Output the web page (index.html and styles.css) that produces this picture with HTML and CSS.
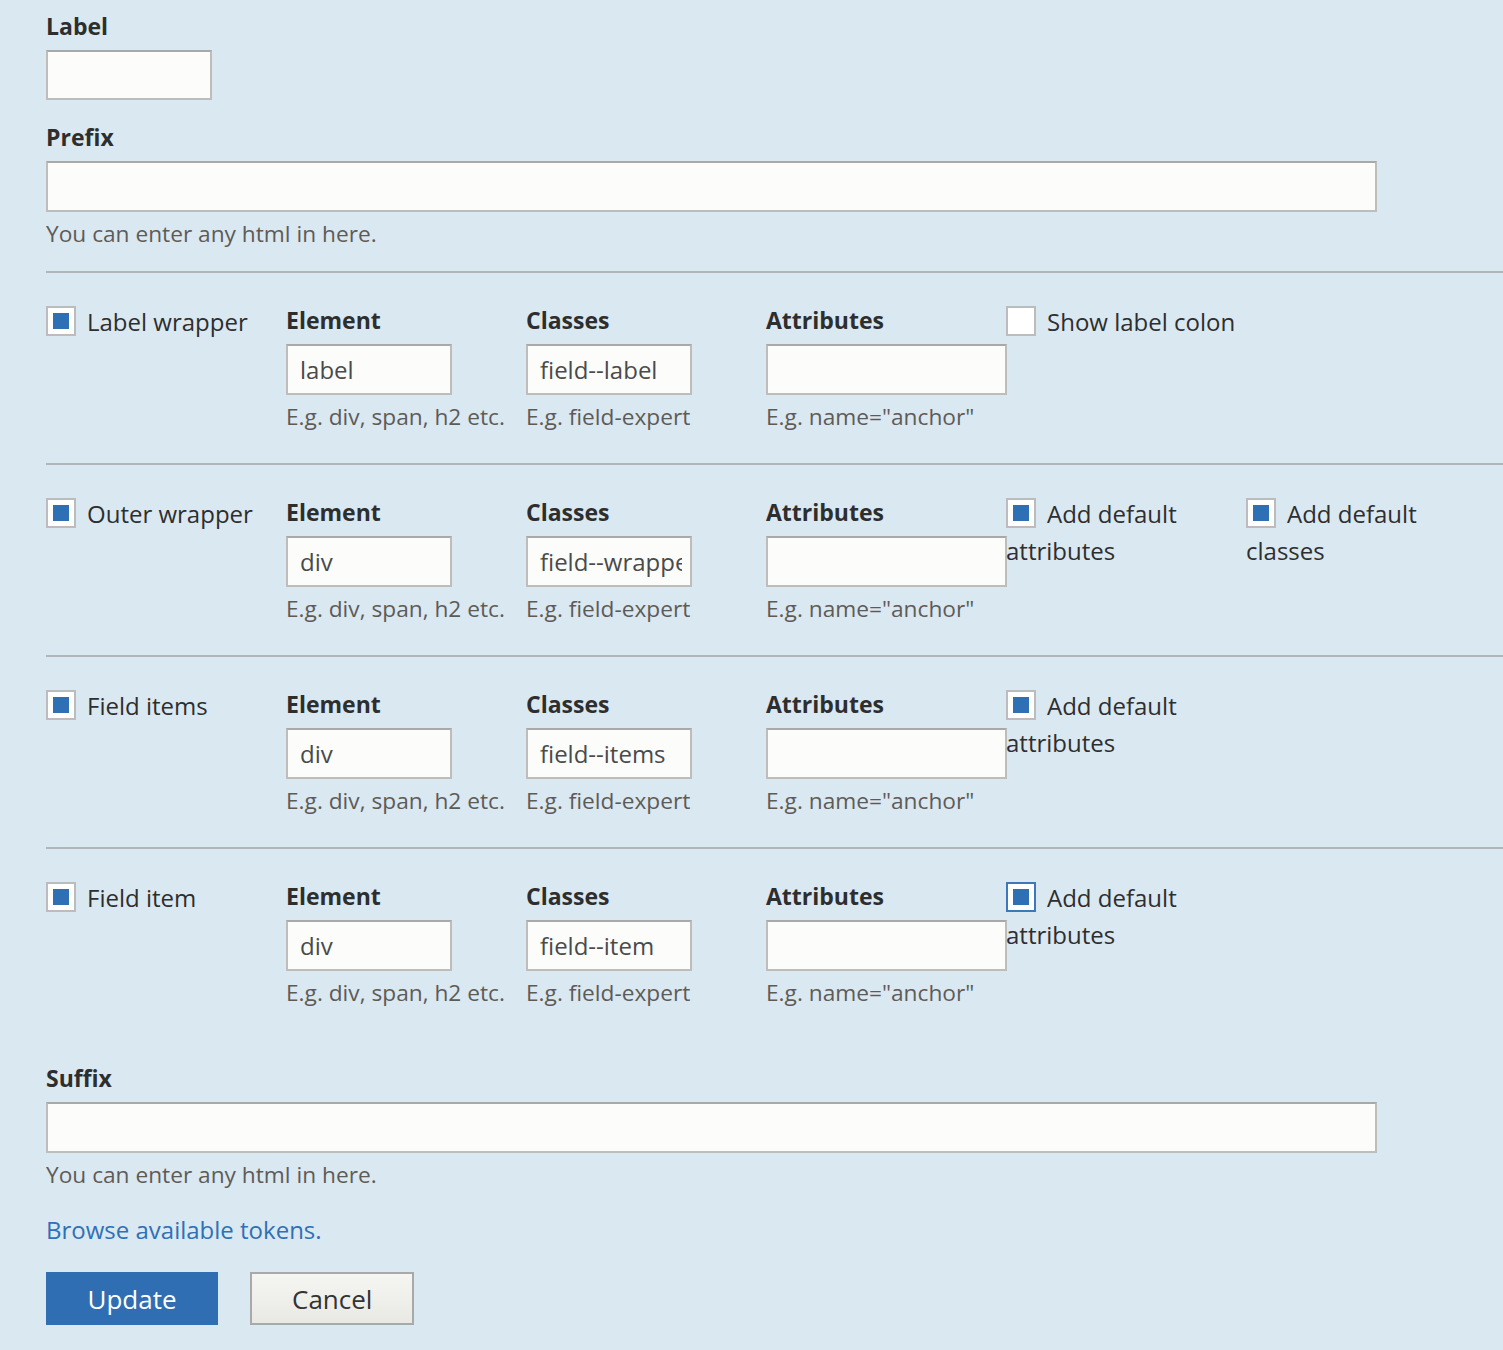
FILE: index.html
```html
<!DOCTYPE html>
<html lang="en">
<head>
<meta charset="utf-8">
<title>Field wrapper settings</title>
<link rel="stylesheet" href="styles.css">
</head>
<body>
<form class="form">
  <div class="field first">
    <label class="title">Label</label>
    <input class="text short label-input" type="text">
  </div>
  <div class="field">
    <label class="title">Prefix</label>
    <input class="text wide" type="text">
    <div class="desc">You can enter any html in here.</div>
  </div>

  <div class="wrap-row">
    <div class="col check-col"><span class="cb checked"></span><span class="cb-text">Label wrapper</span></div>
    <div class="col"><div class="title">Element</div><input class="text short" type="text" value="label"><div class="desc">E.g. div, span, h2 etc.</div></div>
    <div class="col"><div class="title">Classes</div><input class="text short" type="text" value="field--label"><div class="desc">E.g. field-expert</div></div>
    <div class="col"><div class="title">Attributes</div><input class="text attr" type="text"><div class="desc">E.g. name="anchor"</div></div>
    <div class="col check-col nowrap"><span class="cb"></span><span class="cb-text">Show label colon</span></div>
  </div>

  <div class="wrap-row">
    <div class="col check-col"><span class="cb checked"></span><span class="cb-text">Outer wrapper</span></div>
    <div class="col"><div class="title">Element</div><input class="text short" type="text" value="div"><div class="desc">E.g. div, span, h2 etc.</div></div>
    <div class="col"><div class="title">Classes</div><input class="text short" type="text" value="field--wrapper"><div class="desc">E.g. field-expert</div></div>
    <div class="col"><div class="title">Attributes</div><input class="text attr" type="text"><div class="desc">E.g. name="anchor"</div></div>
    <div class="col check-col"><span class="cb checked"></span><span class="cb-text">Add default attributes</span></div>
    <div class="col check-col"><span class="cb checked"></span><span class="cb-text">Add default classes</span></div>
  </div>

  <div class="wrap-row">
    <div class="col check-col"><span class="cb checked"></span><span class="cb-text">Field items</span></div>
    <div class="col"><div class="title">Element</div><input class="text short" type="text" value="div"><div class="desc">E.g. div, span, h2 etc.</div></div>
    <div class="col"><div class="title">Classes</div><input class="text short" type="text" value="field--items"><div class="desc">E.g. field-expert</div></div>
    <div class="col"><div class="title">Attributes</div><input class="text attr" type="text"><div class="desc">E.g. name="anchor"</div></div>
    <div class="col check-col"><span class="cb checked"></span><span class="cb-text">Add default attributes</span></div>
  </div>

  <div class="wrap-row">
    <div class="col check-col"><span class="cb checked"></span><span class="cb-text">Field item</span></div>
    <div class="col"><div class="title">Element</div><input class="text short" type="text" value="div"><div class="desc">E.g. div, span, h2 etc.</div></div>
    <div class="col"><div class="title">Classes</div><input class="text short" type="text" value="field--item"><div class="desc">E.g. field-expert</div></div>
    <div class="col"><div class="title">Attributes</div><input class="text attr" type="text"><div class="desc">E.g. name="anchor"</div></div>
    <div class="col check-col"><span class="cb checked focused"></span><span class="cb-text">Add default attributes</span></div>
  </div>

  <div class="field suffix">
    <label class="title">Suffix</label>
    <input class="text wide" type="text">
    <div class="desc">You can enter any html in here.</div>
  </div>

  <div class="tokens"><a href="#" class="link">Browse available tokens.</a></div>

  <div class="actions">
    <button type="button" class="btn primary">Update</button>
    <button type="button" class="btn secondary">Cancel</button>
  </div>
</form>
</body>
</html>
```

FILE: styles.css
```css
html, body {
  margin: 0;
  padding: 0;
  background: #dae8f1;
}

body {
  font-family: "Open Sans", "Noto Sans", "Liberation Sans", sans-serif;
  color: #333;
  font-size: 24px;
}

.form {
  padding: 9px 0 0 46px;
}

.field {
  margin-top: 20px;
}

.field.first {
  margin-top: 0;
}

.title {
  display: block;
  font-weight: 700;
  font-size: 23px;
  line-height: 34px;
  color: #2e2e2e;
  margin-bottom: 7px;
}

.text {
  display: block;
  box-sizing: border-box;
  height: 51px;
  margin: 0;
  padding: 0 8px 0 12px;
  border: 2px solid #bdbdbb;
  border-top-color: #a9a9a7;
  background: #fcfcfa;
  font-family: "Open Sans", "Noto Sans", "Liberation Sans", sans-serif;
  font-size: 24px;
  color: #4a4a4a;
  border-radius: 0;
  outline: none;
}

.text.label-input {
  height: 50px;
}

.short {
  width: 166px;
}

.attr {
  width: 241px;
}

.wide {
  width: 1331px;
}

.desc {
  margin-top: 7px;
  font-size: 22.7px;
  line-height: 30px;
  color: #5e5b57;
}

.wrap-row {
  display: flex;
  margin-top: 22px;
  border-top: 2px solid #b2b6b8;
  padding: 30px 0 31px;
}

.wrap-row + .wrap-row {
  margin-top: 0;
}

.col {
  width: 240px;
  flex: none;
}

.check-col {
  font-size: 24px;
  line-height: 37px;
  color: #2e2e2e;
}

.nowrap {
  white-space: nowrap;
}

.cb {
  display: inline-block;
  box-sizing: border-box;
  width: 30px;
  height: 30px;
  border: 2px solid #bcbcbc;
  background: #fff;
  vertical-align: top;
  margin-top: 3px;
  margin-right: 11px;
  position: relative;
}

.cb.checked::after {
  content: "";
  position: absolute;
  left: 5px;
  top: 5px;
  width: 16px;
  height: 16px;
  background: #2f6fb4;
}

.cb.focused {
  border-color: #3c78ba;
}

.suffix {
  margin-top: 22px;
}

.tokens {
  margin-top: 23px;
  line-height: 34px;
}

.link {
  color: #2f70b6;
  text-decoration: none;
  font-size: 24px;
}

.actions {
  margin-top: 25px;
  display: flex;
  gap: 32px;
}

.btn {
  box-sizing: border-box;
  height: 53px;
  padding: 0 40px;
  font-family: "Open Sans", "Noto Sans", "Liberation Sans", sans-serif;
  font-size: 26px;
  border-radius: 0;
  margin: 0;
}

.primary {
  width: 172px;
  background: #2f6eb3;
  border: 1px solid #2f6eb3;
  color: #fff;
}

.secondary {
  width: 164px;
  background: linear-gradient(#f5f5f2, #e9e9e4);
  border: 2px solid #a9a9a9;
  color: #333;
}
```
